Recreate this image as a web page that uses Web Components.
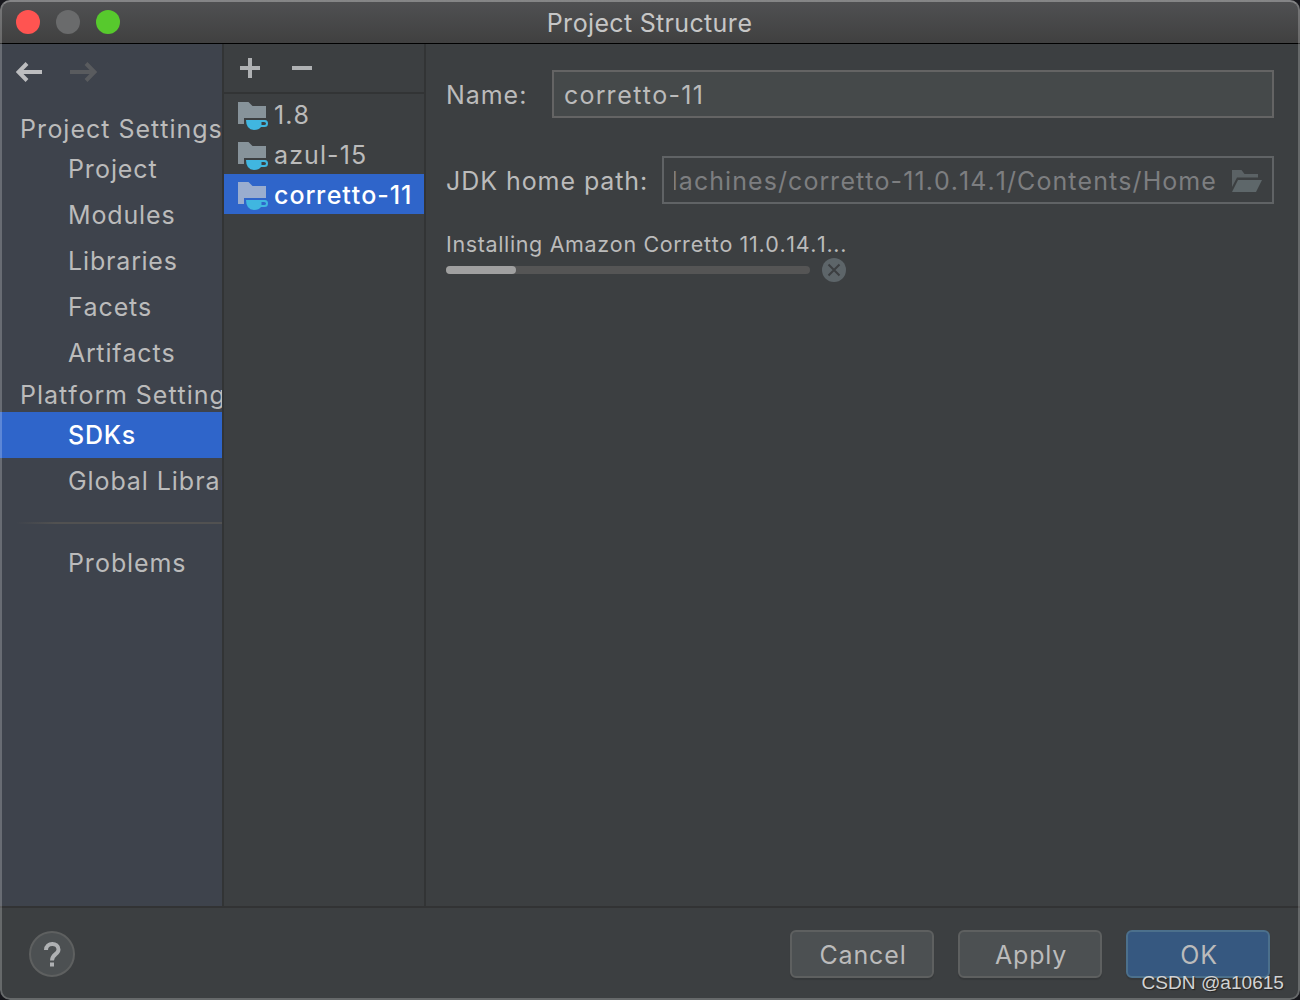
<!DOCTYPE html>
<html lang="en">

<head>
  <meta charset="UTF-8" />
  <meta name="viewport" content="width=device-width" />

  <title>Project Structure</title>

  <style>
    body {
      margin: 0;
      background: #17171c;
      overflow: hidden;
    }
  </style>
</head>

<body>
  <template id="tpl-window">
    <style>
      :host {
        position: relative;
        display: flex;
        flex-direction: column;
        box-sizing: border-box;
        width: 1300px;
        height: 1000px;
        border-radius: 10px;
        overflow: hidden;
        background: #3c3f41;
        color: #bbbbbb;
        font: 25px/30px Inter, "Liberation Sans", sans-serif;
        font-kerning: none;
        letter-spacing: 0.85px;
        white-space: nowrap;
      }

      /* light rim drawn over everything */
      :host::after {
        content: "";
        position: absolute;
        inset: 0;
        border: 2px solid rgba(255, 255, 255, 0.22);
        border-top-color: rgba(255, 255, 255, 0.3);
        border-radius: 10px;
        pointer-events: none;
      }

      .body {
        display: flex;
        flex: 1;
        min-height: 0;
      }
    </style>
    <slot name="title"></slot>
    <div class="body"><slot></slot></div>
    <slot name="footer"></slot>
  </template>

  <template id="tpl-titlebar">
    <style>
      :host {
        display: grid;
        grid-template-columns: 1fr auto 1fr;
        align-items: center;
        box-sizing: border-box;
        height: 44px;
        padding: 0 17px 0 16px;
        border-bottom: 1px solid #000;
        background: linear-gradient(#505153, #404040);
        color: #c6c6c6;
        letter-spacing: 0.32px;
      }

      .lights {
        display: flex;
        gap: 16px;
      }

      i {
        width: 24px;
        height: 24px;
        border-radius: 50%;
        background: #6a6b6c;
      }

      i:first-child {
        background: #ff5451;
      }

      i:last-child {
        background: #57c92d;
      }

      .text {
        padding-top: 2px;
      }
    </style>
    <div class="lights"><i></i><i></i><i></i></div>
    <div class="text"><slot></slot></div>
  </template>

  <template id="tpl-sidebar">
    <style>
      :host {
        display: flex;
        flex-direction: column;
        flex: none;
        width: 222px;
        overflow: hidden;
        border-right: 2px solid #323435;
        background: #3e434c;
      }

      .history {
        display: flex;
        gap: 26px;
        padding: 18px 0 0 16px;
        height: 47px;
      }
    </style>
    <div class="history">
      <svg width="27" height="20" viewBox="0 0 27 20" fill="none" stroke="#bcbdbf" stroke-width="4">
        <path d="M26 10H3M11 1.5L2.6 10L11 18.5" />
      </svg>
      <svg width="28" height="20" viewBox="0 0 28 20" fill="none" stroke="#595b5e" stroke-width="4">
        <path d="M1 10H25M17 1.5L25.4 10L17 18.5" />
      </svg>
    </div>
    <slot></slot>
  </template>

  <template id="tpl-nav-item">
    <style>
      :host {
        display: flex;
        align-items: center;
        flex: none;
        height: 46px;
        padding-left: 68px;
      }

      :host([selected]) {
        background: #2f65ca;
        color: #fff;
        font-weight: 500;
        letter-spacing: 0.8px;
      }

      :host([heading]) {
        box-sizing: border-box;
        height: 36px;
        padding: 2px 0 0 20px;
        letter-spacing: 1px;
      }

      :host([heading]:first-of-type) {
        height: 37px;
      }
    </style>
    <span><slot></slot></span>
  </template>

  <template id="tpl-divider">
    <style>
      :host {
        display: block;
        flex: none;
        height: 2px;
        margin: 18px 0 16px 16px;
        background: linear-gradient(90deg, transparent, #515151 40px);
      }
    </style>
  </template>

  <template id="tpl-sdk-list">
    <style>
      :host {
        display: flex;
        flex-direction: column;
        flex: none;
        width: 200px;
        border-right: 2px solid #323435;
      }

      .tools {
        display: flex;
        align-items: center;
        gap: 30px;
        height: 48px;
        padding-left: 15px;
        border-bottom: 2px solid #323435;
      }
    </style>
    <div class="tools">
      <svg width="22" height="22" viewBox="0 0 22 22" fill="#afb1b3">
        <path d="M9 1h4v8h8v4h-8v8H9v-8H1V9h8z" />
      </svg>
      <svg width="22" height="22" viewBox="0 0 22 22" fill="#afb1b3">
        <path d="M1 9h20v4H1z" />
      </svg>
    </div>
    <slot></slot>
  </template>

  <template id="tpl-sdk-item">
    <style>
      :host {
        --folder: #87939a;
        display: flex;
        align-items: center;
        gap: 4px;
        flex: none;
        height: 40px;
        padding-left: 14px;
        letter-spacing: 1.1px;
      }

      :host([selected]) {
        --folder: #9aadcf;
        background: #2f65ca;
        color: #fff;
        font-weight: 500;
        letter-spacing: 0.95px;
      }

      svg {
        flex: none;
        padding-top: 4px;
      }

      span {
        padding-top: 2px;
      }
    </style>
    <svg width="32" height="28" viewBox="0 0 32 28">
      <path fill="var(--folder)" d="M0 0H10.5L14.5 4H28V16H6V22H0Z" />
      <path fill="#40b6e0" fill-rule="evenodd"
        d="M8 18H27Q30 18 30 21.5T26.5 25H23Q21 28 16 28Q8 27.500 8 18ZM23.500 20V23H26Q28 23 28 21.500T26 20Z" />
    </svg>
    <span><slot></slot></span>
  </template>

  <template id="tpl-details">
    <style>
      :host {
        display: flex;
        flex-direction: column;
        flex: 1;
        min-width: 0;
        padding: 26px 26px 0 20px;
      }
    </style>
    <slot></slot>
  </template>

  <template id="tpl-field">
    <style>
      :host {
        display: flex;
        align-items: center;
        height: 48px;
        margin-bottom: 38px;
      }

      .label {
        flex: none;
        width: var(--label, 106px);
        padding-top: 2px;
        letter-spacing: 0.95px;
      }

      .box {
        display: flex;
        align-items: center;
        flex: 1;
        min-width: 0;
        box-sizing: border-box;
        height: 48px;
        padding: 0 10px;
        border: 2px solid #646464;
        background: #45494a;
        letter-spacing: 1.3px;
      }

      .value {
        display: flex;
        flex: 1;
        overflow: hidden;
        padding-top: 2px;
      }

      svg {
        display: none;
        flex: none;
        margin-left: 15px;
        padding-top: 2px;
      }

      /* read-only path: scrolled to its end, with a browse icon */
      :host([browse]) .box {
        border-color: #606365;
        background: none;
        color: #7d7e80;
        letter-spacing: 1.07px;
      }

      :host([browse]) .value {
        justify-content: flex-end;
      }

      :host([browse]) svg {
        display: block;
      }
    </style>
    <div class="label"></div>
    <div class="box">
      <div class="value"><span><slot></slot></span></div>
      <svg width="30" height="22" viewBox="0 0 30 22">
        <path fill="#5b6265" d="M0 0H9.500L12.500 4H26V7.500H5L0 17Z" />
        <path fill="#5e676a" d="M6 10H30L24 22H0Z" />
      </svg>
    </div>
  </template>

  <template id="tpl-progress">
    <style>
      :host {
        display: flex;
        flex-direction: column;
        width: 400px;
        margin-top: -12px;
        font-size: 21.5px;
        line-height: 28px;
        letter-spacing: 0.65px;
      }

      .row {
        display: flex;
        align-items: center;
        gap: 12px;
      }

      .track {
        flex: 1;
        height: 8px;
        border-radius: 4px;
        background: #555555;
      }

      .bar {
        width: 70px;
        height: 8px;
        border-radius: 4px;
        background: #a0a0a0;
      }
    </style>
    <span><slot></slot></span>
    <div class="row">
      <div class="track"><div class="bar"></div></div>
      <svg width="24" height="24" viewBox="0 0 24 24">
        <circle cx="12" cy="12" r="12" fill="#5d6569" />
        <path d="M6.500 6.500L17.500 17.500M17.500 6.500L6.500 17.500" stroke="#3c3f41" stroke-width="2" />
      </svg>
    </div>
  </template>

  <template id="tpl-footer">
    <style>
      :host {
        display: flex;
        align-items: center;
        gap: 24px;
        box-sizing: border-box;
        height: 94px;
        padding: 0 30px 0 29px;
        border-top: 2px solid #323334;
      }

      .help {
        margin-right: auto;
      }
    </style>
    <svg class="help" width="46" height="46" viewBox="0 0 46 46" fill="none">
      <circle cx="23" cy="23" r="22" fill="#4c5052" stroke="#5e6060" stroke-width="2" />
      <path d="M17 19C17 11 29.500 11 29.500 18.500C29.500 23.500 23 23 23 29.500" stroke="#afb1b3" stroke-width="4" />
      <path d="M21 31.500h4v4h-4z" fill="#afb1b3" />
    </svg>
    <slot></slot>
  </template>

  <template id="tpl-button">
    <style>
      :host {
        display: flex;
        align-items: center;
        justify-content: center;
        box-sizing: border-box;
        width: 144px;
        height: 48px;
        padding-top: 2px;
        padding-left: 2px;
        border: 2px solid #5e6060;
        border-radius: 6px;
        background: #4c5052;
        box-shadow: 0 2px 1px rgba(0, 0, 0, 0.1);
      }

      :host([primary]) {
        border-color: #4c708c;
        background: #365880;
      }
    </style>
    <span><slot></slot></span>
  </template>

  <template id="tpl-watermark">
    <style>
      :host {
        position: absolute;
        right: 16px;
        bottom: 6px;
        font: 19.1px/22px "Liberation Sans", sans-serif;
        letter-spacing: 0;
        color: #d2d3d4;
        text-shadow: 1px 1px 1px #222;
      }
    </style>
    <slot></slot>
  </template>

  <ps-window>
    <ps-titlebar slot="title">Project Structure</ps-titlebar>

    <ps-sidebar>
      <ps-nav-item heading>Project Settings</ps-nav-item>
      <ps-nav-item>Project</ps-nav-item>
      <ps-nav-item>Modules</ps-nav-item>
      <ps-nav-item>Libraries</ps-nav-item>
      <ps-nav-item>Facets</ps-nav-item>
      <ps-nav-item>Artifacts</ps-nav-item>
      <ps-nav-item heading>Platform Settings</ps-nav-item>
      <ps-nav-item selected>SDKs</ps-nav-item>
      <ps-nav-item style="letter-spacing: 0.95px">Global Libraries</ps-nav-item>
      <ps-divider></ps-divider>
      <ps-nav-item>Problems</ps-nav-item>
    </ps-sidebar>

    <ps-sdk-list>
      <ps-sdk-item>1.8</ps-sdk-item>
      <ps-sdk-item>azul-15</ps-sdk-item>
      <ps-sdk-item selected>corretto-11</ps-sdk-item>
    </ps-sdk-list>

    <ps-details>
      <ps-field label="Name:">corretto-11</ps-field>
      <ps-field label="JDK home path:" browse style="--label: 216px">Machines/corretto-11.0.14.1/Contents/Home</ps-field>
      <ps-progress>Installing Amazon Corretto 11.0.14.1...</ps-progress>
    </ps-details>

    <ps-footer slot="footer">
      <ps-button>Cancel</ps-button>
      <ps-button>Apply</ps-button>
      <ps-button primary>OK</ps-button>
      <ps-watermark>CSDN @a10615</ps-watermark>
    </ps-footer>
  </ps-window>

  <script>
    class PsElement extends HTMLElement {
      constructor() {
        super();

        this.attachShadow({ mode: "open" });
        const name = this.localName.replace("ps-", "tpl-");
        const tpl = document.getElementById(name);
        this.shadowRoot.append(tpl.content.cloneNode(true));
      }
    }

    class PsField extends PsElement {
      connectedCallback() {
        this.shadowRoot.querySelector(".label").textContent = this.getAttribute("label");
      }
    }

    customElements.define("ps-window", class extends PsElement {});
    customElements.define("ps-titlebar", class extends PsElement {});
    customElements.define("ps-sidebar", class extends PsElement {});
    customElements.define("ps-nav-item", class extends PsElement {});
    customElements.define("ps-divider", class extends PsElement {});
    customElements.define("ps-sdk-list", class extends PsElement {});
    customElements.define("ps-sdk-item", class extends PsElement {});
    customElements.define("ps-details", class extends PsElement {});
    customElements.define("ps-field", PsField);
    customElements.define("ps-progress", class extends PsElement {});
    customElements.define("ps-footer", class extends PsElement {});
    customElements.define("ps-button", class extends PsElement {});
    customElements.define("ps-watermark", class extends PsElement {});
  </script>
</body>

</html>
